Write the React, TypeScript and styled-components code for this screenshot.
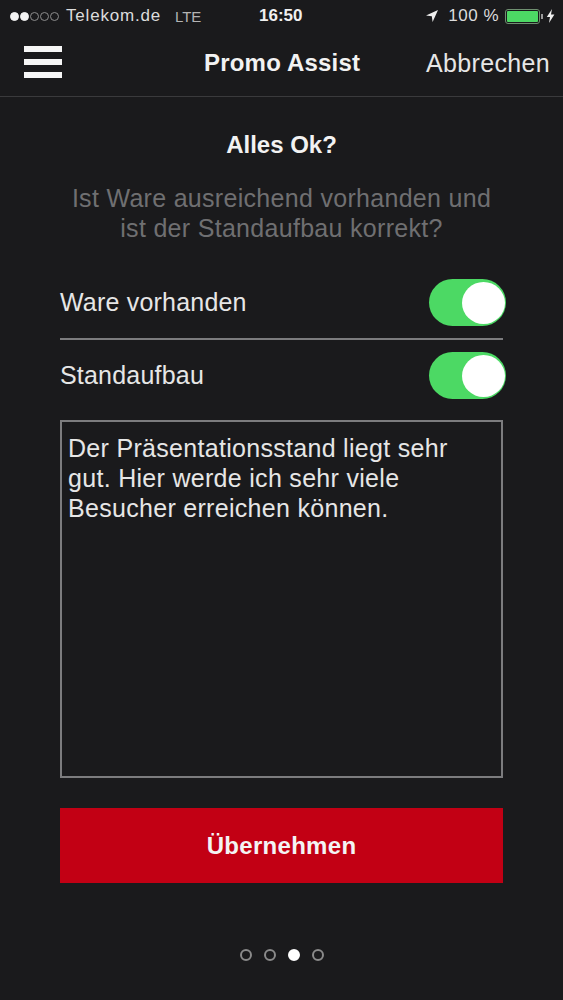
import React from "react";
import styled, { createGlobalStyle } from "styled-components";

const GlobalStyle = createGlobalStyle`
  html, body {
    margin: 0;
    padding: 0;
    background: #1a1a1c;
  }
  * {
    box-sizing: border-box;
  }
`;

function LocationArrow() {
  return (
    <svg width="14" height="14" viewBox="0 0 14 14">
      <path d="M13 1 L1 6.6 L6.8 7.2 L7.6 13 Z" fill="#efefef" />
    </svg>
  );
}

function Bolt() {
  return (
    <svg width="9" height="14" viewBox="0 0 9 14">
      <path d="M6 0 L0.8 8 L4 8 L3 14 L8.4 5.6 L5 5.6 Z" fill="#efefef" />
    </svg>
  );
}

export default function App() {
  return (
    <>
      <GlobalStyle />
      <Screen>
        <StatusBar>
          <StatusLeft>
            <Signal>
              <SignalDot $on />
              <SignalDot $on />
              <SignalDot />
              <SignalDot />
              <SignalDot />
            </Signal>
            <Carrier>Telekom.de</Carrier>
            <Network>LTE</Network>
          </StatusLeft>
          <Clock>16:50</Clock>
          <StatusRight>
            <LocationArrow />
            <Percent>100 %</Percent>
            <Battery>
              <BatteryFill />
            </Battery>
            <BatteryTip />
            <Bolt />
          </StatusRight>
        </StatusBar>

        <NavBar>
          <Burger>
            <BurgerLine />
            <BurgerLine />
            <BurgerLine />
          </Burger>
          <NavTitle>Promo Assist</NavTitle>
          <NavAction>Abbrechen</NavAction>
        </NavBar>

        <Content>
          <Heading>Alles Ok?</Heading>
          <Question>
            Ist Ware ausreichend vorhanden und
            <br />
            ist der Standaufbau korrekt?
          </Question>

          <ToggleRow $divider>
            <span>Ware vorhanden</span>
            <Toggle>
              <Knob />
            </Toggle>
          </ToggleRow>
          <ToggleRow>
            <span>Standaufbau</span>
            <Toggle>
              <Knob />
            </Toggle>
          </ToggleRow>

          <NoteBox>
            Der Präsentationsstand liegt sehr gut. Hier werde ich sehr viele
            Besucher erreichen können.
          </NoteBox>

          <SubmitButton>Übernehmen</SubmitButton>
        </Content>

        <Pager>
          <PagerDot />
          <PagerDot />
          <PagerDot $active />
          <PagerDot />
        </Pager>
      </Screen>
    </>
  );
}

const Screen = styled.div`
  width: 563px;
  height: 1000px;
  overflow: hidden;
  background: #1a1a1c;
  color: #f4f4f4;
  font-family: "Liberation Sans", Arial, sans-serif;
`;

const StatusBar = styled.div`
  height: 32px;
  padding: 0 8px 0 10px;
  display: grid;
  grid-template-columns: 249px auto 1fr;
  align-items: center;
  font-size: 17px;
`;

const StatusLeft = styled.div`
  display: flex;
  align-items: center;
`;

const Signal = styled.div`
  display: flex;
  gap: 1px;
  margin-right: 7px;
`;

const SignalDot = styled.div<{ $on?: boolean }>`
  width: 9px;
  height: 9px;
  border-radius: 50%;
  border: 1px solid ${(p) => (p.$on ? "#f4f4f4" : "#8c8c8c")};
  background: ${(p) => (p.$on ? "#f4f4f4" : "transparent")};
`;

const Carrier = styled.span`
  letter-spacing: 0.8px;
  color: #dcdcdc;
`;

const Network = styled.span`
  margin-left: 14px;
  font-size: 15px;
  color: #b4b4b4;
`;

const Clock = styled.span`
  font-weight: 700;
  color: #f0f0f0;
`;

const StatusRight = styled.div`
  display: flex;
  align-items: center;
  justify-content: flex-end;
`;

const Percent = styled.span`
  margin: 0 6px 0 9px;
  letter-spacing: 0.5px;
  color: #dcdcdc;
`;

const Battery = styled.div`
  width: 35px;
  height: 15px;
  padding: 1px;
  border: 1px solid #6f8f70;
  border-radius: 3px;
`;

const BatteryFill = styled.div`
  height: 100%;
  border-radius: 1px;
  background: #4cd964;
`;

const BatteryTip = styled.div`
  width: 2px;
  height: 5px;
  margin: 0 3px 0 1px;
  background: #9a9a9a;
`;

const NavBar = styled.div`
  height: 65px;
  padding: 0 13px 2px 24px;
  display: grid;
  grid-template-columns: 180px auto 1fr;
  align-items: center;
  border-bottom: 1px solid #3a3a3c;
`;

const Burger = styled.div`
  display: flex;
  flex-direction: column;
  gap: 7px;
  margin-bottom: 3px;
`;

const BurgerLine = styled.div`
  width: 38px;
  height: 6px;
  background: #f6f6f6;
`;

const NavTitle = styled.div`
  font-size: 24px;
  font-weight: 700;
  letter-spacing: 0.2px;
  color: #f2f2f2;
`;

const NavAction = styled.div`
  font-size: 25px;
  letter-spacing: 0.35px;
  text-align: right;
  color: #e6e6e6;
`;

const Content = styled.div`
  padding: 0 60px;
`;

const Heading = styled.h1`
  margin: 34px 0 0;
  font-size: 24px;
  line-height: 28px;
  font-weight: 700;
  text-align: center;
  color: #f2f2f2;
`;

const Question = styled.p`
  margin: 24px -10px 0;
  font-size: 25px;
  line-height: 30px;
  letter-spacing: 0.3px;
  text-align: center;
  color: #6f6f71;
`;

const ToggleRow = styled.div<{ $divider?: boolean }>`
  height: ${(p) => (p.$divider ? "73px" : "70px")};
  margin-top: ${(p) => (p.$divider ? "24px" : "0")};
  display: flex;
  align-items: center;
  justify-content: space-between;
  font-size: 25px;
  letter-spacing: 0.2px;
  color: #e6e6e6;
  border-bottom: ${(p) => (p.$divider ? "2px solid #7c7c7e" : "none")};
`;

const Toggle = styled.div`
  width: 77px;
  height: 47px;
  margin-right: -3px;
  padding: 3px 1px 2px;
  display: flex;
  justify-content: flex-end;
  border-radius: 24px;
  background: #4cd964;
`;

const Knob = styled.div`
  width: 43px;
  height: 42px;
  border-radius: 50%;
  background: #fff;
`;

const NoteBox = styled.div`
  height: 358px;
  margin-top: 10px;
  padding: 11px 12px 11px 6px;
  border: 2px solid #7c7c7e;
  font-size: 25px;
  line-height: 30px;
  letter-spacing: 0.3px;
  color: #e6e6e6;
`;

const SubmitButton = styled.button`
  display: block;
  width: 100%;
  height: 75px;
  margin-top: 30px;
  border: none;
  background: #c20014;
  color: #f4f4f4;
  font-family: inherit;
  font-size: 24px;
  font-weight: 700;
  letter-spacing: 0.3px;
`;

const Pager = styled.div`
  margin-top: 66px;
  display: flex;
  justify-content: center;
  gap: 12px;
`;

const PagerDot = styled.div<{ $active?: boolean }>`
  width: 12px;
  height: 12px;
  border-radius: 50%;
  border: 2px solid ${(p) => (p.$active ? "#fff" : "#8a8a8a")};
  background: ${(p) => (p.$active ? "#fff" : "transparent")};
`;
